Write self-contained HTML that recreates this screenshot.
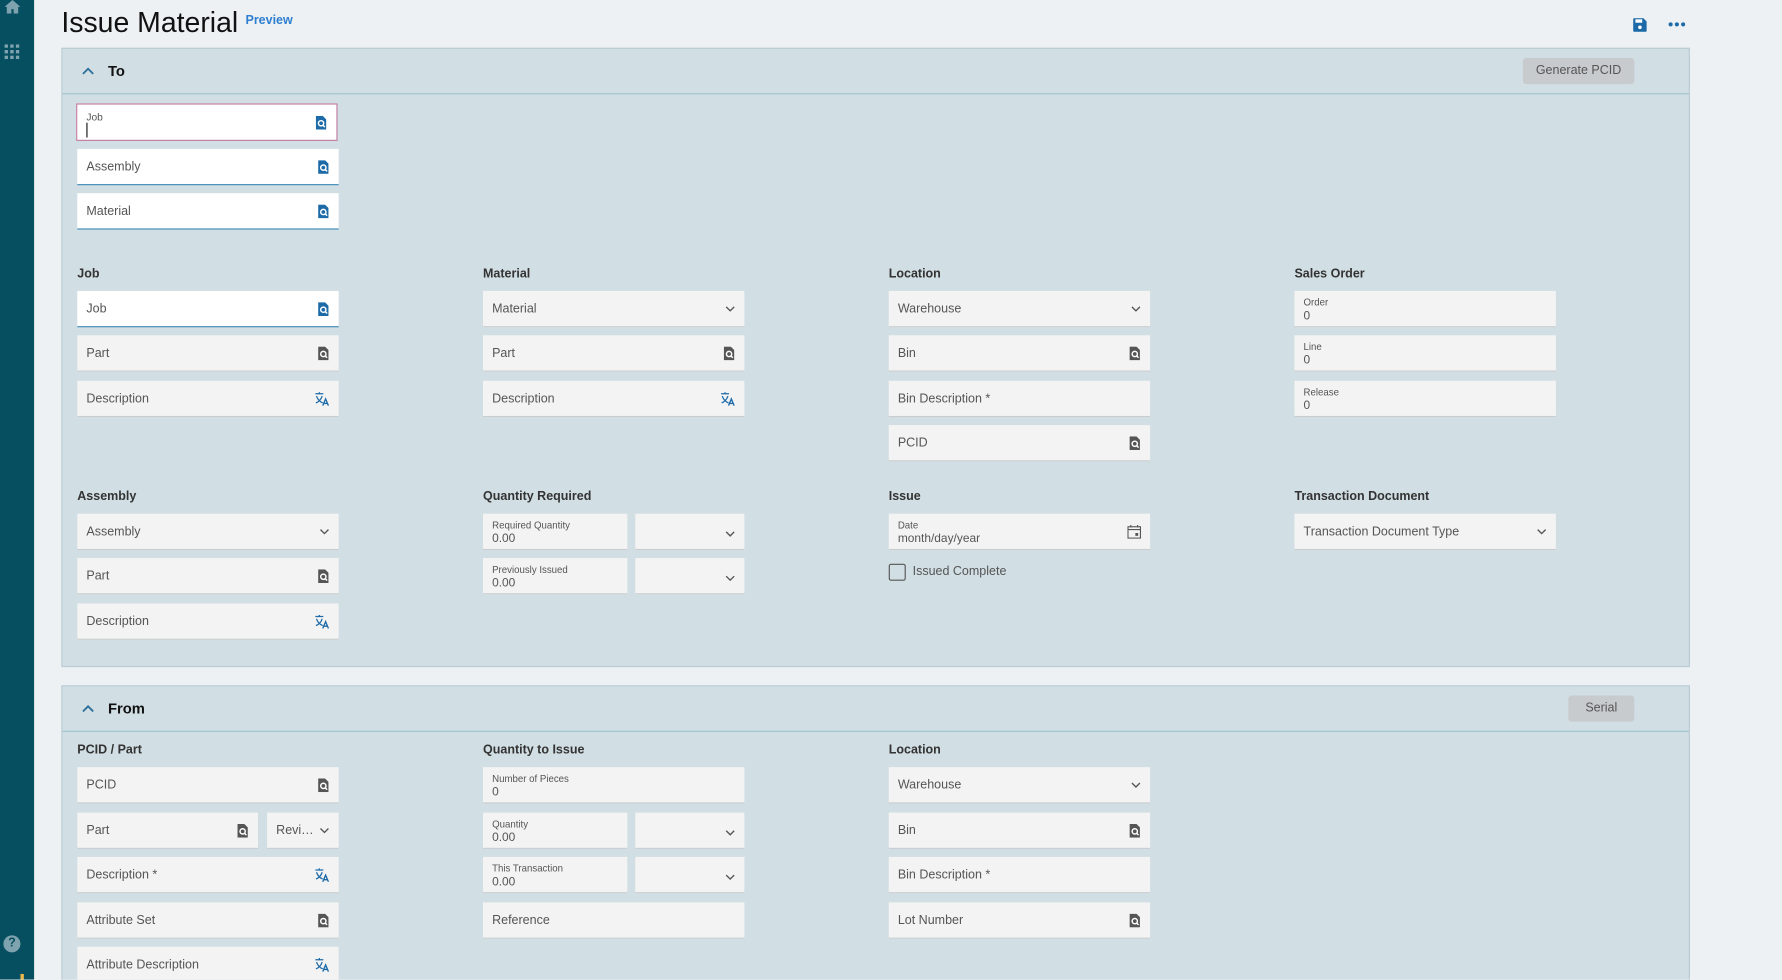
<!DOCTYPE html>
<html><head><meta charset="utf-8">
<style>
*{margin:0;padding:0;box-sizing:border-box}
html,body{width:1782px;height:980px;overflow:hidden;background:#edf1f4;font-family:"Liberation Sans",sans-serif}
#w{position:absolute;left:0;top:0;width:1568px;height:862px;overflow:hidden;transform:scale(1.13648);transform-origin:0 0}
.a{position:absolute}
.f{position:absolute;width:230px;height:32px;background:#f3f3f3;border-bottom:1px solid #c9cdd0;font-size:11px;color:#555}
.f.w{background:#fff;border-bottom:1px solid #3a86b4}
.f .t{position:absolute;left:8px;top:10px;white-space:nowrap}
.f .l{position:absolute;left:8px;top:5px;font-size:8.5px;color:#555}
.f .v{position:absolute;left:8px;top:16px;font-size:10.5px;color:#555}
.f svg{position:absolute;right:8px;top:10px}
.h{position:absolute;font-size:11px;font-weight:bold;color:#333}
.panel{position:absolute;left:54px;width:1433px;background:#d1dee3;border:1px solid #b9ccd3}
.ph{position:absolute;left:0;right:0;top:0;height:40px;border-bottom:1px solid #9fc3cf}
</style></head><body>
<div id="w">
<div class="a" style="left:0;top:0;width:30px;height:862px;background:#064f61"></div>
<svg class="a" style="left:4px;top:0" width="14" height="12"><path d="M7 0L0 6h2v6h4V8h2v4h4V6h2z" fill="#7fa3ae"/></svg>
<svg class="a" style="left:4px;top:39px" width="13" height="13" fill="#7fa3ae"><rect x="0" y="0" width="3" height="3"/><rect x="5" y="0" width="3" height="3"/><rect x="10" y="0" width="3" height="3"/><rect x="0" y="5" width="3" height="3"/><rect x="5" y="5" width="3" height="3"/><rect x="10" y="5" width="3" height="3"/><rect x="0" y="10" width="3" height="3"/><rect x="5" y="10" width="3" height="3"/><rect x="10" y="10" width="3" height="3"/></svg>
<div class="a" style="left:3px;top:823px;width:15px;height:15px;border-radius:50%;background:#7fa3ae;color:#064f61;font-size:11px;font-weight:bold;text-align:center;line-height:15px">?</div>
<div class="a" style="left:18px;top:857px;width:3px;height:5px;background:#e8b84a"></div>

<div class="a" style="left:54px;top:6px;font-size:25px;color:#111">Issue Material</div>
<div class="a" style="left:216px;top:12px;font-size:11px;color:#2f7fd0;font-weight:bold">Preview</div>
<svg class="a" style="left:1437px;top:16px" width="12" height="12"><path d="M0 1a1 1 0 011-1h8l3 3v8a1 1 0 01-1 1H1a1 1 0 01-1-1z" fill="#1c6aa8"/><rect x="2" y="1" width="6" height="3" fill="#fff"/><circle cx="6" cy="8" r="1.6" fill="#fff"/></svg>
<svg class="a" style="left:1468px;top:19px" width="15" height="5" fill="#1c6aa8"><circle cx="2" cy="2.5" r="1.8"/><circle cx="7.5" cy="2.5" r="1.8"/><circle cx="13" cy="2.5" r="1.8"/></svg>

<div class="panel" style="top:42px;height:545px">
 <div class="ph"></div>
 <svg class="a" style="left:17px;top:16px" width="11" height="7"><path d="M1 6l4.5-4.5L10 6" stroke="#2b6f9a" stroke-width="1.6" fill="none"/></svg>
 <div class="a" style="left:40px;top:12px;font-size:13px;font-weight:bold;color:#111">To</div>
 <div class="a" style="left:1285px;top:8px;width:98px;height:23px;background:#c8cbcd;border-radius:3px;font-size:11px;color:#555;text-align:center;line-height:23px">Generate PCID</div>
</div>

<div class="panel" style="top:603px;height:300px">
 <div class="ph"></div>
 <svg class="a" style="left:17px;top:16px" width="11" height="7"><path d="M1 6l4.5-4.5L10 6" stroke="#2b6f9a" stroke-width="1.6" fill="none"/></svg>
 <div class="a" style="left:40px;top:12px;font-size:13px;font-weight:bold;color:#111">From</div>
 <div class="a" style="left:1325px;top:8px;width:58px;height:23px;background:#c8cbcd;border-radius:3px;font-size:11px;color:#555;text-align:center;line-height:23px">Serial</div>
</div>

<div class="f w" style="left:67px;top:91px;height:33px;border:1px solid #c27a9e"><div class="l" style="top:6px;font-size:9px">Job</div><div class="a" style="left:8px;top:16px;width:1px;height:13px;background:#111"></div>
<svg width="11" height="12"><path d="M1 0h6l3 3v9H1z" fill="#1c6aa8"/><circle cx="5.5" cy="6.5" r="2.3" fill="none" stroke="#fff" stroke-width="1.3"/><path d="M7.2 8.2l1.6 1.6" stroke="#fff" stroke-width="1.3"/></svg></div>
<div class="f w" style="left:68px;top:131px"><div class="t">Assembly</div><svg width="11" height="12"><path d="M1 0h6l3 3v9H1z" fill="#1c6aa8"/><circle cx="5.5" cy="6.5" r="2.3" fill="none" stroke="#fff" stroke-width="1.3"/><path d="M7.2 8.2l1.6 1.6" stroke="#fff" stroke-width="1.3"/></svg></div>
<div class="f w" style="left:68px;top:170px"><div class="t">Material</div><svg width="11" height="12"><path d="M1 0h6l3 3v9H1z" fill="#1c6aa8"/><circle cx="5.5" cy="6.5" r="2.3" fill="none" stroke="#fff" stroke-width="1.3"/><path d="M7.2 8.2l1.6 1.6" stroke="#fff" stroke-width="1.3"/></svg></div>

<div class="h" style="left:68px;top:235px">Job</div>
<div class="h" style="left:425px;top:235px">Material</div>
<div class="h" style="left:782px;top:235px">Location</div>
<div class="h" style="left:1139px;top:235px">Sales Order</div>

<div class="f w" style="left:68px;top:256px"><div class="t">Job</div><svg width="11" height="12"><path d="M1 0h6l3 3v9H1z" fill="#1c6aa8"/><circle cx="5.5" cy="6.5" r="2.3" fill="none" stroke="#fff" stroke-width="1.3"/><path d="M7.2 8.2l1.6 1.6" stroke="#fff" stroke-width="1.3"/></svg></div>
<div class="f" style="left:68px;top:295px"><div class="t">Part</div><svg width="11" height="12"><path d="M1 0h6l3 3v9H1z" fill="#555"/><circle cx="5.5" cy="6.5" r="2.3" fill="none" stroke="#fff" stroke-width="1.3"/><path d="M7.2 8.2l1.6 1.6" stroke="#fff" stroke-width="1.3"/></svg></div>
<div class="f" style="left:68px;top:335px"><div class="t">Description</div><svg width="13" height="12"><path d="M0.5 1.5h7M4 0v1.5M1.5 3.5c1 3 3 5 5.5 6M6.5 3.5c-1 3-3 5-5.5 6" stroke="#1c6aa8" stroke-width="1.1" fill="none"/><path d="M7 12l2.5-6 2.5 6M8 10h3" stroke="#1c6aa8" stroke-width="1.2" fill="none"/></svg></div>

<div class="f" style="left:425px;top:256px"><div class="t">Material</div><svg width="9" height="6" style="top:13px"><path d="M1 1l3.5 3.5L8 1" stroke="#555" stroke-width="1.2" fill="none"/></svg></div>
<div class="f" style="left:425px;top:295px"><div class="t">Part</div><svg width="11" height="12"><path d="M1 0h6l3 3v9H1z" fill="#555"/><circle cx="5.5" cy="6.5" r="2.3" fill="none" stroke="#fff" stroke-width="1.3"/><path d="M7.2 8.2l1.6 1.6" stroke="#fff" stroke-width="1.3"/></svg></div>
<div class="f" style="left:425px;top:335px"><div class="t">Description</div><svg width="13" height="12"><path d="M0.5 1.5h7M4 0v1.5M1.5 3.5c1 3 3 5 5.5 6M6.5 3.5c-1 3-3 5-5.5 6" stroke="#1c6aa8" stroke-width="1.1" fill="none"/><path d="M7 12l2.5-6 2.5 6M8 10h3" stroke="#1c6aa8" stroke-width="1.2" fill="none"/></svg></div>

<div class="f" style="left:782px;top:256px"><div class="t">Warehouse</div><svg width="9" height="6" style="top:13px"><path d="M1 1l3.5 3.5L8 1" stroke="#555" stroke-width="1.2" fill="none"/></svg></div>
<div class="f" style="left:782px;top:295px"><div class="t">Bin</div><svg width="11" height="12"><path d="M1 0h6l3 3v9H1z" fill="#555"/><circle cx="5.5" cy="6.5" r="2.3" fill="none" stroke="#fff" stroke-width="1.3"/><path d="M7.2 8.2l1.6 1.6" stroke="#fff" stroke-width="1.3"/></svg></div>
<div class="f" style="left:782px;top:335px"><div class="t">Bin Description *</div></div>
<div class="f" style="left:782px;top:374px"><div class="t">PCID</div><svg width="11" height="12"><path d="M1 0h6l3 3v9H1z" fill="#555"/><circle cx="5.5" cy="6.5" r="2.3" fill="none" stroke="#fff" stroke-width="1.3"/><path d="M7.2 8.2l1.6 1.6" stroke="#fff" stroke-width="1.3"/></svg></div>

<div class="f" style="left:1139px;top:256px"><div class="l">Order</div><div class="v">0</div></div>
<div class="f" style="left:1139px;top:295px"><div class="l">Line</div><div class="v">0</div></div>
<div class="f" style="left:1139px;top:335px"><div class="l">Release</div><div class="v">0</div></div>

<div class="h" style="left:68px;top:431px">Assembly</div>
<div class="h" style="left:425px;top:431px">Quantity Required</div>
<div class="h" style="left:782px;top:431px">Issue</div>
<div class="h" style="left:1139px;top:431px">Transaction Document</div>

<div class="f" style="left:68px;top:452px"><div class="t">Assembly</div><svg width="9" height="6" style="top:13px"><path d="M1 1l3.5 3.5L8 1" stroke="#555" stroke-width="1.2" fill="none"/></svg></div>
<div class="f" style="left:68px;top:491px"><div class="t">Part</div><svg width="11" height="12"><path d="M1 0h6l3 3v9H1z" fill="#555"/><circle cx="5.5" cy="6.5" r="2.3" fill="none" stroke="#fff" stroke-width="1.3"/><path d="M7.2 8.2l1.6 1.6" stroke="#fff" stroke-width="1.3"/></svg></div>
<div class="f" style="left:68px;top:531px"><div class="t">Description</div><svg width="13" height="12"><path d="M0.5 1.5h7M4 0v1.5M1.5 3.5c1 3 3 5 5.5 6M6.5 3.5c-1 3-3 5-5.5 6" stroke="#1c6aa8" stroke-width="1.1" fill="none"/><path d="M7 12l2.5-6 2.5 6M8 10h3" stroke="#1c6aa8" stroke-width="1.2" fill="none"/></svg></div>

<div class="f" style="left:425px;top:452px;width:127px"><div class="l">Required Quantity</div><div class="v">0.00</div></div>
<div class="f" style="left:559px;top:452px;width:96px"><svg width="9" height="6" style="top:15px"><path d="M1 1l3.5 3.5L8 1" stroke="#555" stroke-width="1.2" fill="none"/></svg></div>
<div class="f" style="left:425px;top:491px;width:127px"><div class="l">Previously Issued</div><div class="v">0.00</div></div>
<div class="f" style="left:559px;top:491px;width:96px"><svg width="9" height="6" style="top:15px"><path d="M1 1l3.5 3.5L8 1" stroke="#555" stroke-width="1.2" fill="none"/></svg></div>

<div class="f" style="left:782px;top:452px"><div class="l">Date</div><div class="v">month/day/year</div><svg width="12" height="12"><rect x="0.5" y="1.5" width="11" height="10" fill="none" stroke="#555"/><path d="M0.5 4h11M3 0v2M9 0v2" stroke="#555"/><rect x="7" y="7" width="2.5" height="2.5" fill="#555"/></svg></div>
<div class="a" style="left:782px;top:496px;width:15px;height:15px;border:1px solid #555;border-radius:2px"></div>
<div class="a" style="left:803px;top:497px;font-size:11px;color:#555">Issued Complete</div>

<div class="f" style="left:1139px;top:452px"><div class="t">Transaction Document Type</div><svg width="9" height="6" style="top:13px"><path d="M1 1l3.5 3.5L8 1" stroke="#555" stroke-width="1.2" fill="none"/></svg></div>

<div class="h" style="left:68px;top:654px">PCID / Part</div>
<div class="h" style="left:425px;top:654px">Quantity to Issue</div>
<div class="h" style="left:782px;top:654px">Location</div>

<div class="f" style="left:68px;top:675px"><div class="t">PCID</div><svg width="11" height="12"><path d="M1 0h6l3 3v9H1z" fill="#555"/><circle cx="5.5" cy="6.5" r="2.3" fill="none" stroke="#fff" stroke-width="1.3"/><path d="M7.2 8.2l1.6 1.6" stroke="#fff" stroke-width="1.3"/></svg></div>
<div class="f" style="left:68px;top:715px;width:159px"><div class="t">Part</div><svg width="11" height="12"><path d="M1 0h6l3 3v9H1z" fill="#555"/><circle cx="5.5" cy="6.5" r="2.3" fill="none" stroke="#fff" stroke-width="1.3"/><path d="M7.2 8.2l1.6 1.6" stroke="#fff" stroke-width="1.3"/></svg></div>
<div class="f" style="left:235px;top:715px;width:63px"><div class="t">Revi…</div><svg width="9" height="6" style="top:13px"><path d="M1 1l3.5 3.5L8 1" stroke="#555" stroke-width="1.2" fill="none"/></svg></div>
<div class="f" style="left:68px;top:754px"><div class="t">Description *</div><svg width="13" height="12"><path d="M0.5 1.5h7M4 0v1.5M1.5 3.5c1 3 3 5 5.5 6M6.5 3.5c-1 3-3 5-5.5 6" stroke="#1c6aa8" stroke-width="1.1" fill="none"/><path d="M7 12l2.5-6 2.5 6M8 10h3" stroke="#1c6aa8" stroke-width="1.2" fill="none"/></svg></div>
<div class="f" style="left:68px;top:794px"><div class="t">Attribute Set</div><svg width="11" height="12"><path d="M1 0h6l3 3v9H1z" fill="#555"/><circle cx="5.5" cy="6.5" r="2.3" fill="none" stroke="#fff" stroke-width="1.3"/><path d="M7.2 8.2l1.6 1.6" stroke="#fff" stroke-width="1.3"/></svg></div>
<div class="f" style="left:68px;top:833px"><div class="t">Attribute Description</div><svg width="13" height="12"><path d="M0.5 1.5h7M4 0v1.5M1.5 3.5c1 3 3 5 5.5 6M6.5 3.5c-1 3-3 5-5.5 6" stroke="#1c6aa8" stroke-width="1.1" fill="none"/><path d="M7 12l2.5-6 2.5 6M8 10h3" stroke="#1c6aa8" stroke-width="1.2" fill="none"/></svg></div>

<div class="f" style="left:425px;top:675px"><div class="l">Number of Pieces</div><div class="v">0</div></div>
<div class="f" style="left:425px;top:715px;width:127px"><div class="l">Quantity</div><div class="v">0.00</div></div>
<div class="f" style="left:559px;top:715px;width:96px"><svg width="9" height="6" style="top:15px"><path d="M1 1l3.5 3.5L8 1" stroke="#555" stroke-width="1.2" fill="none"/></svg></div>
<div class="f" style="left:425px;top:754px;width:127px"><div class="l">This Transaction</div><div class="v">0.00</div></div>
<div class="f" style="left:559px;top:754px;width:96px"><svg width="9" height="6" style="top:15px"><path d="M1 1l3.5 3.5L8 1" stroke="#555" stroke-width="1.2" fill="none"/></svg></div>
<div class="f" style="left:425px;top:794px"><div class="t">Reference</div></div>

<div class="f" style="left:782px;top:675px"><div class="t">Warehouse</div><svg width="9" height="6" style="top:13px"><path d="M1 1l3.5 3.5L8 1" stroke="#555" stroke-width="1.2" fill="none"/></svg></div>
<div class="f" style="left:782px;top:715px"><div class="t">Bin</div><svg width="11" height="12"><path d="M1 0h6l3 3v9H1z" fill="#555"/><circle cx="5.5" cy="6.5" r="2.3" fill="none" stroke="#fff" stroke-width="1.3"/><path d="M7.2 8.2l1.6 1.6" stroke="#fff" stroke-width="1.3"/></svg></div>
<div class="f" style="left:782px;top:754px"><div class="t">Bin Description *</div></div>
<div class="f" style="left:782px;top:794px"><div class="t">Lot Number</div><svg width="11" height="12"><path d="M1 0h6l3 3v9H1z" fill="#555"/><circle cx="5.5" cy="6.5" r="2.3" fill="none" stroke="#fff" stroke-width="1.3"/><path d="M7.2 8.2l1.6 1.6" stroke="#fff" stroke-width="1.3"/></svg></div>
</div></body></html>
